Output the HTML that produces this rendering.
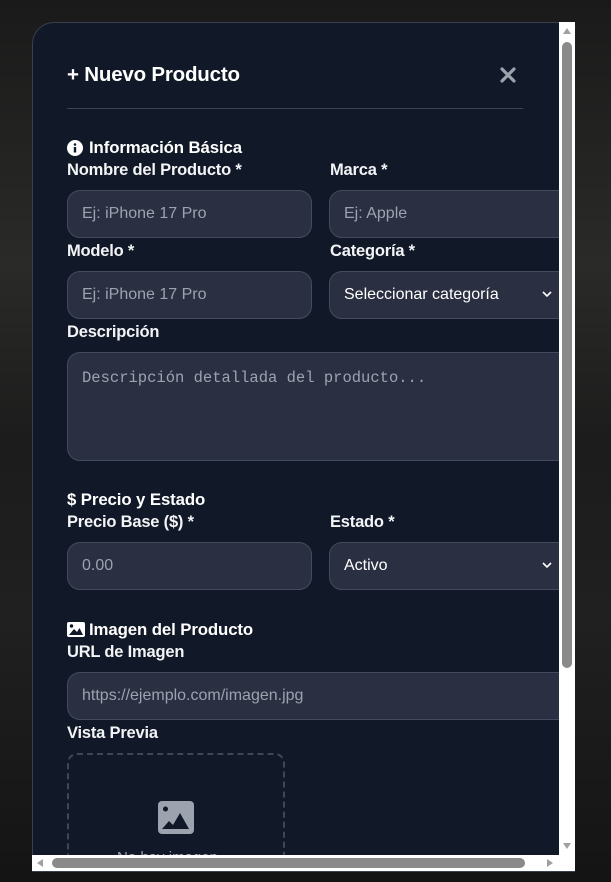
<!DOCTYPE html>
<html><head><meta charset="utf-8"><style>
*{box-sizing:border-box;margin:0;padding:0}
body{width:611px;height:882px;overflow:hidden;background:#141414;font-family:"Liberation Sans",sans-serif;position:relative}
.bg{position:absolute;inset:0;background:linear-gradient(180deg,#1a1a1a 0%,#2a2a28 30%,#1c1c1c 50%,#202020 70%,#141414 100%)}
.modal{position:absolute;left:32px;top:22px;width:543px;height:850px;background:#111827;border:1px solid #3a4050;border-radius:22px 0 0 0;overflow:hidden}
.inner{position:absolute;left:-33px;top:-23px;width:700px;height:900px}
.a{position:absolute;color:#fff;white-space:nowrap}
.h{font-size:16.8px;font-weight:bold;letter-spacing:-0.1px}
.l{font-size:16.5px;font-weight:bold;color:#f3f4f6;letter-spacing:-0.2px}
.in{position:absolute;height:48px;background:#2a2f42;border:1px solid #454b5e;border-radius:13px;color:#9ca3af;font-size:16px;padding-left:14px;line-height:46px}
.sel{color:#fff}
.sbv{position:absolute;left:559px;top:22px;width:16px;height:833px;background:#fff}
.sbh{position:absolute;left:32px;top:855px;width:543px;height:16px;background:#fff}
</style></head><body>
<div class="bg"></div>
<div class="modal"><div class="inner">
<div class="a" style="left:67px;top:63px;font-size:20.5px;font-weight:bold;letter-spacing:-0.2px">+ Nuevo Producto</div>
<svg class="a" style="left:500px;top:67px" width="16" height="16" viewBox="0 0 16 16"><path d="M2 2L14 14M14 2L2 14" stroke="#9ca3af" stroke-width="3.2" stroke-linecap="round"/></svg>
<div class="a" style="left:67px;top:108px;width:456px;height:1px;background:#3b4252"></div>

<svg class="a" style="left:67px;top:140px" width="16" height="16" viewBox="0 0 16 16"><circle cx="8" cy="8" r="8" fill="#fff"/><circle cx="8" cy="4.5" r="1.3" fill="#111827"/><rect x="6.8" y="7" width="2.4" height="5.5" fill="#111827"/></svg>
<div class="a h" style="left:89px;top:138px">Información Básica</div>
<div class="a l" style="left:67px;top:161px">Nombre del Producto *</div>
<div class="a l" style="left:330px;top:161px">Marca *</div>
<div class="in" style="left:67px;top:190px;width:245px">Ej: iPhone 17 Pro</div>
<div class="in" style="left:329px;top:190px;width:260px">Ej: Apple</div>
<div class="a l" style="left:67px;top:242px">Modelo *</div>
<div class="a l" style="left:330px;top:242px">Categoría *</div>
<div class="in" style="left:67px;top:271px;width:245px">Ej: iPhone 17 Pro</div>
<div class="in sel" style="left:329px;top:271px;width:260px">Seleccionar categoría<svg style="position:absolute;left:212px;top:19px" width="10" height="7" viewBox="0 0 10 7"><path d="M1 1L5 5L9 1" stroke="#fff" stroke-width="1.6" fill="none"/></svg></div>
<div class="a l" style="left:67px;top:323px">Descripción</div>
<div class="in" style="left:67px;top:352px;width:520px;height:109px;line-height:normal;padding-top:16px;font-family:'Liberation Mono',monospace;font-size:15.5px">Descripción detallada del producto...</div>

<div class="a h" style="left:67px;top:490px">$ Precio y Estado</div>
<div class="a l" style="left:67px;top:513px">Precio Base ($) *</div>
<div class="a l" style="left:330px;top:513px">Estado *</div>
<div class="in" style="left:67px;top:542px;width:245px">0.00</div>
<div class="in sel" style="left:329px;top:542px;width:260px">Activo<svg style="position:absolute;left:212px;top:19px" width="10" height="7" viewBox="0 0 10 7"><path d="M1 1L5 5L9 1" stroke="#fff" stroke-width="1.6" fill="none"/></svg></div>

<svg class="a" style="left:67px;top:622px" width="18" height="15" viewBox="0 0 18 15"><rect width="18" height="15" rx="2" fill="#fff"/><circle cx="4.5" cy="4" r="1.7" fill="#111827"/><path d="M2 13L7 7L10 10L12.5 6L16 13Z" fill="#111827"/></svg>
<div class="a h" style="left:89px;top:620px">Imagen del Producto</div>
<div class="a l" style="left:67px;top:643px">URL de Imagen</div>
<div class="in" style="left:67px;top:672px;width:520px">https://ejemplo.com/imagen.jpg</div>
<div class="a l" style="left:67px;top:724px">Vista Previa</div>
<div class="a" style="left:67px;top:753px;width:218px;height:160px;border:2px dashed #3f4658;border-radius:10px"></div>
<svg class="a" style="left:158px;top:801px" width="36" height="33" viewBox="0 0 36 33"><rect width="36" height="33" rx="4" fill="#9ca3af"/><circle cx="7.5" cy="8" r="2.5" fill="#111827"/><path d="M4 28L11 20L15 24L22 12L31 28Z" fill="#111827"/></svg>
<div class="a" style="left:117px;top:849px;color:#9ca3af;font-size:15px">No hay imagen</div>
</div></div>
<div class="sbv">
<svg style="position:absolute;left:3px;top:5px" width="10" height="8"><path d="M1 7L5 1L9 7Z" fill="#a0a0a0"/></svg>
<div style="position:absolute;left:3px;top:20px;width:10px;height:626px;background:#8a8a8a;border-radius:5px"></div>
<svg style="position:absolute;left:3px;top:820px" width="10" height="8"><path d="M1 1L5 7L9 1Z" fill="#a0a0a0"/></svg>
</div>
<div class="sbh">
<svg style="position:absolute;left:4px;top:3px" width="8" height="10"><path d="M7 1L1 5L7 9Z" fill="#a0a0a0"/></svg>
<div style="position:absolute;left:20px;top:3px;width:473px;height:10px;background:#8a8a8a;border-radius:5px"></div>
<svg style="position:absolute;left:514px;top:3px" width="8" height="10"><path d="M1 1L7 5L1 9Z" fill="#a0a0a0"/></svg>
</div>
</body></html>
